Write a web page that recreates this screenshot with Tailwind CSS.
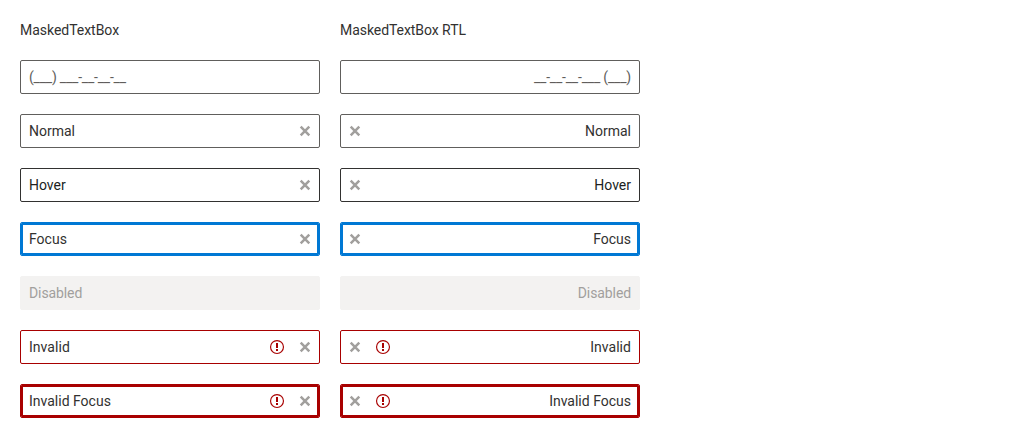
<!DOCTYPE html>
<html lang="en"><head><meta charset="utf-8"><title>MaskedTextBox</title>
<script src="https://cdn.jsdelivr.net/npm/@tailwindcss/browser@4"></script></head>
<body class="bg-white p-5 font-[Roboto,sans-serif] text-sm leading-5 text-[#323130] antialiased">
<svg class="hidden">
<symbol id="x" viewBox="0 0 16 16"><path d="M3.7 3.7l8.6 8.6M12.3 3.7l-8.6 8.6" fill="none" stroke="#a19f9d" stroke-width="2.5"/></symbol>
<symbol id="e" viewBox="0 0 16 16"><circle cx="8" cy="8" r="6.45" fill="none" stroke="#a80000" stroke-width="1.15"/><path d="M7 4h2v5H7zM7 10h2v2H7z" fill="#a80000"/></symbol></svg>
<main class="grid grid-cols-[300px_300px] gap-5">
<div class="tracking-[-0.03px]">MaskedTextBox</div><div class="tracking-[-0.06px]">MaskedTextBox RTL</div>

<div class="flex h-[34px] items-center rounded-xs border border-[#605e5c] px-2 tracking-[-0.21px] text-[#605e5c]">(___) ___-__-__-__</div>
<div class="flex h-[34px] items-center justify-end rounded-xs border border-[#605e5c] px-2 tracking-[-0.19px] text-[#605e5c]">__-__-__-___ (___)</div>

<div class="flex h-[34px] items-center justify-between rounded-xs border border-[#605e5c] pr-1.5 pl-2"><span>Normal</span><svg class="size-4"><use href="#x"/></svg></div>
<div class="flex h-[34px] items-center justify-between rounded-xs border border-[#605e5c] pr-2 pl-1.5"><svg class="size-4"><use href="#x"/></svg><span>Normal</span></div>

<div class="flex h-[34px] items-center justify-between rounded-xs border border-[#323130] pr-1.5 pl-2 text-[#201f1e]"><span>Hover</span><svg class="size-4"><use href="#x"/></svg></div>
<div class="flex h-[34px] items-center justify-between rounded-xs border border-[#323130] pr-2 pl-1.5 text-[#201f1e]"><svg class="size-4"><use href="#x"/></svg><span>Hover</span></div>

<div class="flex h-[34px] items-center justify-between rounded-xs border border-[#0078d4] pr-1.5 pl-2 shadow-[inset_0_0_0_2px_#0078d4]"><span>Focus</span><svg class="size-4"><use href="#x"/></svg></div>
<div class="flex h-[34px] items-center justify-between rounded-xs border border-[#0078d4] pr-2 pl-1.5 shadow-[inset_0_0_0_2px_#0078d4]"><svg class="size-4"><use href="#x"/></svg><span>Focus</span></div>

<div class="flex h-[34px] items-center rounded-xs border border-[#f3f2f1] bg-[#f3f2f1] px-2 tracking-[-0.1px] text-[#a19f9d]">Disabled</div>
<div class="flex h-[34px] items-center justify-end rounded-xs border border-[#f3f2f1] bg-[#f3f2f1] px-2 tracking-[-0.1px] text-[#a19f9d]">Disabled</div>

<div class="flex h-[34px] items-center gap-3 rounded-xs border border-[#a80000] pr-1.5 pl-2"><span class="flex-1 tracking-[0.04px]">Invalid</span><svg class="size-4"><use href="#e"/></svg><svg class="size-4"><use href="#x"/></svg></div>
<div class="flex h-[34px] items-center gap-3 rounded-xs border border-[#a80000] pr-2 pl-1.5"><svg class="size-4"><use href="#x"/></svg><svg class="size-4"><use href="#e"/></svg><span class="flex-1 text-right tracking-[0.04px]">Invalid</span></div>

<div class="flex h-[34px] items-center gap-3 rounded-xs border border-[#a80000] pr-1.5 pl-2 shadow-[inset_0_0_0_2px_#a80000]"><span class="flex-1">Invalid Focus</span><svg class="size-4"><use href="#e"/></svg><svg class="size-4"><use href="#x"/></svg></div>
<div class="flex h-[34px] items-center gap-3 rounded-xs border border-[#a80000] pr-2 pl-1.5 shadow-[inset_0_0_0_2px_#a80000]"><svg class="size-4"><use href="#x"/></svg><svg class="size-4"><use href="#e"/></svg><span class="flex-1 text-right">Invalid Focus</span></div>
</main></body></html>
